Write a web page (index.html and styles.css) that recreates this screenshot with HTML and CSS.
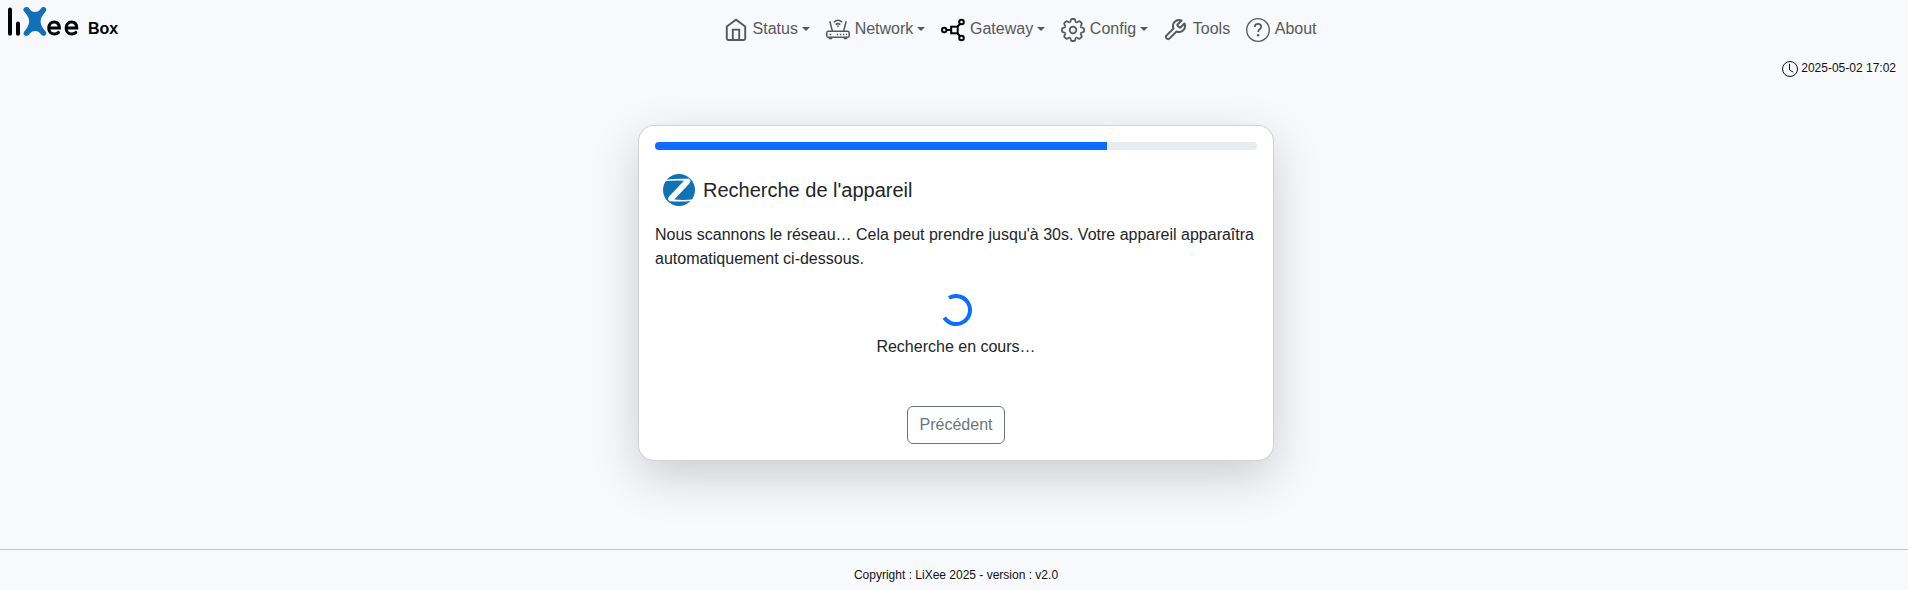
FILE: index.html
```html
<!DOCTYPE html>
<html lang="fr">
<head>
<meta charset="utf-8">
<title>LiXee Box</title>
<link rel="stylesheet" href="styles.css">
</head>
<body>
<header class="navbar">
  <a class="brand">
    <svg class="logo" width="72" height="32" viewBox="0 0 72 32" fill="none" stroke="#050505" stroke-width="4" stroke-linecap="round">
      <path d="M2 2.500V26.800M10 16.500V26.800"/>
      <path d="M16 1C17.500-.4 20-.3 21.200 1.500 24 6.300 30 6.300 33 1.500 34.200-.3 36.500-.4 37.700 1c1 1.200 .8 2.400-.3 3.700C31 12 31 17 37.600 24.500c1 1.200 1 2.400 .1 3.400-1.300 1.400-3.500 1.200-4.700-.5-2.700-4.600-9-4.600-11.800 0-1.200 1.700-3.700 1.900-5 .5-.9-1-.9-2.300 .1-3.500C22.800 17 22.800 12 16.200 4.600 15.100 3.300 15 2.200 16 1Z" fill="#1171b8" stroke="none"/>
      <path d="M41 21H51.400C51.200 17 49 15 46.100 15 42.800 15 40.700 17.500 40.700 21s2.100 6 5.700 6c1.600 0 3-.5 4-1.600M58.400 21H68.800C68.600 17 66.400 15 63.500 15 60.200 15 58.100 17.500 58.100 21s2.100 6 5.700 6c1.600 0 3-.5 4-1.600" stroke-width="3"/>
    </svg>
    <span>Box</span>
  </a>
  <nav class="menu">
    <a class="link"><svg class="icon" viewBox="0 0 24 24"><path d="M2.800 8.500 12 1.800l9.200 6.700v11.700a1.800 1.800 0 0 1-1.800 1.800H4.600a1.800 1.800 0 0 1-1.800-1.800ZM8.800 21.800V11.600h6.400v10.200" stroke-width="1.900"/></svg><span class="caret">Status</span></a>
    <a class="link"><svg class="icon" viewBox="0 0 24 24" stroke-width="1.500"><rect x=".8" y="13.300" width="22.400" height="6" rx="1.600"/><path d="M3.800 3.200 6.500 13.500M20.200 3.200l-2.700 10.300M7.800 4.200q4.200-4 8.400 0M9.700 6.600q2.300-2 4.600 0M3.500 19.500v1h2v-1M18.500 19.500v1h2v-1M3.500 16.400h1.800M10.800 16.400h1.300M13.900 16.400h1.300M17 16.400h1.300M20 16.400h1"/><circle cx="12" cy="8.200" r=".3"/></svg><span class="caret">Network</span></a>
    <a class="link"><svg class="icon gateway" viewBox="0 0 24 24"><circle cx="3.200" cy="12" r="2.200"/><circle cx="20.500" cy="4" r="2.300"/><circle cx="20.500" cy="20" r="2.300"/><rect x="10.200" y="8.700" width="6.500" height="6.600"/><path d="M5.400 12H10.200M16.200 9l2.800-3.200M16.200 15l2.800 3.200"/></svg><span class="caret">Gateway</span></a>
    <a class="link"><svg class="icon" viewBox="-12 -12 24 24" stroke-width="1.800"><defs><path id="tooth" d="M-3.210-7.760C-2.300-8.140-2.400-9-2.200-9.900Q-2-11-1-11H1Q2-11 2.200-9.900C2.400-9 2.300-8.140 3.210-7.760"/></defs><circle r="3.300"/><use href="#tooth"/><use href="#tooth" transform="rotate(45)"/><use href="#tooth" transform="rotate(90)"/><use href="#tooth" transform="rotate(135)"/><use href="#tooth" transform="rotate(180)"/><use href="#tooth" transform="rotate(225)"/><use href="#tooth" transform="rotate(270)"/><use href="#tooth" transform="rotate(315)"/></svg><span class="caret">Config</span></a>
    <a class="link"><svg class="icon" viewBox="1 0 24 24" stroke-width="2" stroke-linejoin="round"><path d="M14.700 6.300a1 1 0 0 0 0 1.400l1.600 1.600a1 1 0 0 0 1.400 0l3.770-3.770a6 6 0 0 1-7.940 7.940l-6.910 6.910a2.120 2.120 0 0 1-3-3l6.910-6.910a6 6 0 0 1 7.940-7.940l-3.760 3.760z"/></svg><span>Tools</span></a>
    <a class="link"><svg class="icon" viewBox="0 0 24 24"><circle cx="12" cy="12" r="11.300" stroke-width="1.300"/><path d="M8.800 9C8.800 6.900 10.200 5.900 12 5.900s3.200 1.100 3.200 2.900c0 2.400-3.100 2.500-3.100 5.200" stroke-width="1.700"/><circle cx="12.100" cy="17.300" r="1.200" fill="currentColor" stroke="none"/></svg><span>About</span></a>
  </nav>
</header>
<div class="clock">
  <svg width="16" height="16" viewBox="0 0 16 16" fill="none" stroke="currentColor"><circle cx="8" cy="8" r="7.500"/><path d="M7.500 3.200V9l3.500 2" stroke-linecap="round"/></svg>
  <span>2025-05-02 17:02</span>
</div>
<main class="content">
  <section class="card">
    <div class="progress"><div class="bar" style="width:75%"></div></div>
    <h5 class="title">
      <svg width="32" height="32" viewBox="0 0 32 32"><circle cx="16" cy="16" r="16" fill="#1171b8"/><path d="M3.200 5.800Q13 4.200 25.800 4.800 28.800 6.500 26.400 9.500L11.300 25.600Q20 26.200 29.200 25.600L28.500 26.900Q18 28 6.800 27.200 3.800 25.500 6 22.500L21 6.700Q12 6.300 2.500 7Z" fill="#fff"/></svg>
      <span>Recherche de l'appareil</span>
    </h5>
    <p class="text">Nous scannons le réseau… Cela peut prendre jusqu'à 30s. Votre appareil apparaîtra automatiquement ci-dessous.</p>
    <div class="search">
      <svg class="spinner" width="32" height="32" viewBox="0 0 32 32"><path d="M9 3.880A14 14 0 1 1 4.300 23.700" fill="none" stroke="#0d6efd" stroke-width="4"/></svg>
      <p class="status">Recherche en cours…</p>
    </div>
    <button class="button" type="button">Précédent</button>
  </section>
</main>
<footer class="footer">Copyright : LiXee 2025 - version : v2.0</footer>
</body>
</html>
```
FILE: styles.css
```css
* { box-sizing: border-box; }
body {
  margin: 0;
  height: 590px;
  overflow: hidden;
  display: flex;
  flex-direction: column;
  background: #f8f9fd;
  color: #212529;
  font: 16px/24px "Liberation Sans", Arial, sans-serif;
}
.navbar { display: flex; height: 60px; padding: 5px 8px 0; }
.brand {
  display: flex;
  width: 708px;
  gap: 8px;
  color: #000;
  font-weight: 700;
}
.brand span { padding-top: 12px; }
.logo { margin-top: 2px; overflow: visible; }
.menu { display: flex; padding-top: 11px; height: 44px; }
.link {
  display: flex;
  align-items: center;
  gap: 4.600px;
  padding: 0 8px;
  height: 28px;
  color: #575859;
}
.link span { display: flex; align-items: center; margin-top: -2px; }
.icon { width: 24px; height: 24px; fill: none; stroke: currentColor; }
.gateway { color: #000; stroke-width: 2; }
.caret::after {
  content: "";
  margin-left: 4.100px;
  border-top: 4.800px solid;
  border-left: 4.800px solid transparent;
  border-right: 4.800px solid transparent;
}
.clock {
  display: flex;
  align-items: center;
  justify-content: flex-end;
  gap: 3px;
  height: 18px;
  padding-right: 12px;
  font-size: 12px;
  line-height: 16px;
  color: #111;
}
.clock span { padding-bottom: 2px; }
.content {
  flex: 1;
  display: flex;
  justify-content: center;
  align-items: flex-start;
  padding: 47px 0 0 4px;
}
.card {
  display: flex;
  flex-direction: column;
  width: 636px;
  height: 336px;
  padding: 16px;
  background: #fff;
  border: 1px solid rgba(0, 0, 0, .175);
  border-radius: 16px;
  box-shadow: 0 16px 48px rgba(0, 0, 0, .175);
}
.progress { height: 8px; overflow: hidden; border-radius: 6px; background: #e9ecef; }
.bar { height: 100%; background: #0d6efd; }
.title {
  display: flex;
  align-items: center;
  gap: 8px;
  margin: 24px 0 17px;
  padding-left: 8px;
  font-size: 20px;
  font-weight: 400;
}
.text { margin: 0; }
.search { display: flex; flex-direction: column; align-items: center; margin-top: 23px; }
.status { margin: 9px 0 0; }
.button {
  align-self: center;
  margin-top: auto;
  height: 38px;
  padding: 6px 12px;
  border: 1px solid #6c757d;
  border-radius: 6px;
  background: transparent;
  color: #6c757d;
  font: inherit;
}
.footer {
  height: 41px;
  padding: 16px 0 0 4px;
  border-top: 1px solid #c1c3c8;
  color: #111;
  font-size: 12px;
  line-height: 18px;
  text-align: center;
}
```
